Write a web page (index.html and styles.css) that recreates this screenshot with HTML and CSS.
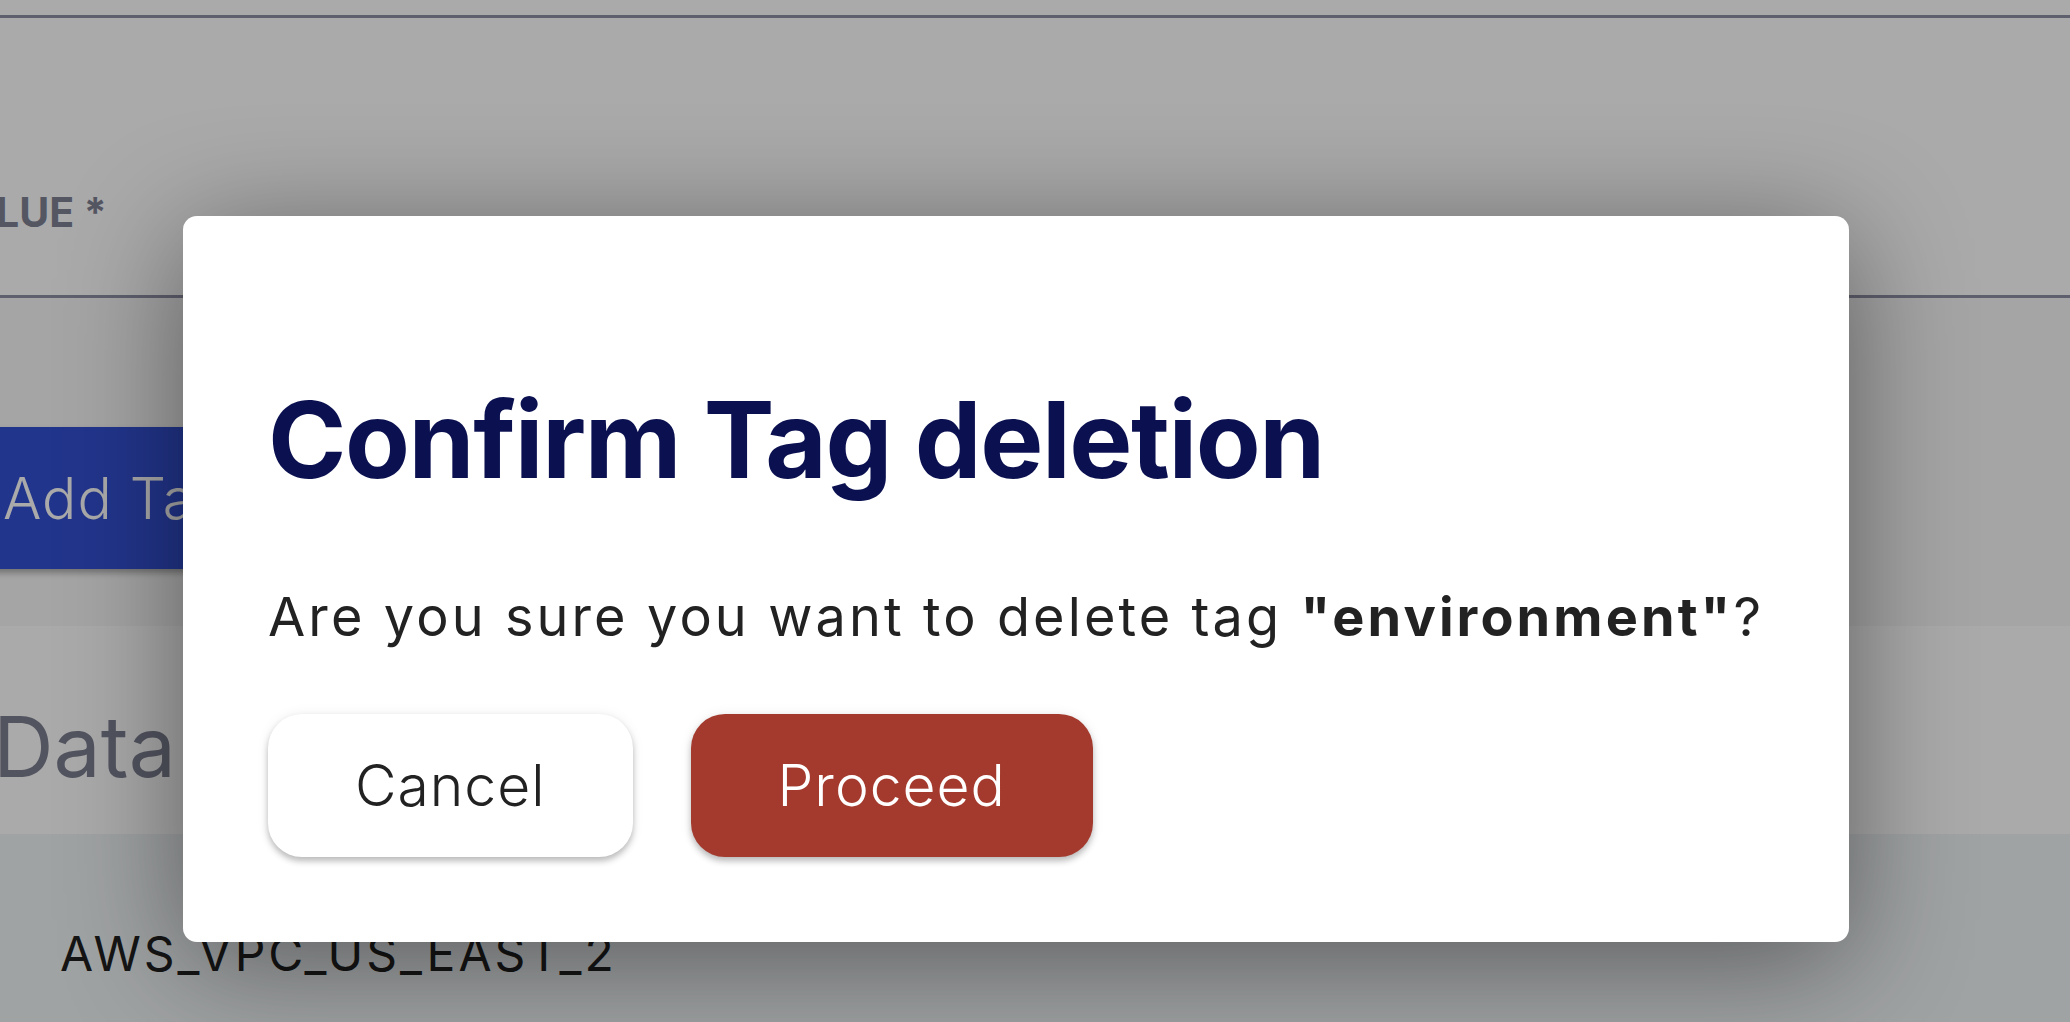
FILE: index.html
```html
<!DOCTYPE html>
<html lang="en">
<head>
<meta charset="utf-8">
<title>Confirm Tag deletion</title>
<link rel="stylesheet" href="styles.css">
</head>
<body>
<div class="page">
  <section class="form-card">
    <div class="field field-key"></div>
    <div class="field field-value">
      <label class="field-label">VALUE *</label>
    </div>
  </section>
  <section class="actions">
    <button class="btn-add">Add Tag</button>
  </section>
  <section class="data-section">
    <h2 class="data-title">Data</h2>
  </section>
  <div class="table-row">
    <span class="cell">AWS_VPC_US_EAST_2</span>
  </div>
</div>
<div class="backdrop"></div>
<div class="modal" role="dialog">
  <h1 class="modal-title">Confirm Tag deletion</h1>
  <p class="modal-text">Are you sure you want to delete tag <strong>"environment"</strong>?</p>
  <div class="modal-actions">
    <button class="btn btn-cancel">Cancel</button>
    <button class="btn btn-proceed">Proceed</button>
  </div>
</div>
</body>
</html>
```
FILE: styles.css
```css
* { box-sizing: border-box; margin: 0; padding: 0; }
html, body { width: 2070px; height: 1022px; }
body {
  font-family: Inter, "Noto Sans", sans-serif;
  background: #fff;
  overflow: hidden;
  position: relative;
}
.page { margin-left: -85px; }

.form-card { background: #fff; height: 298px; }
.field-key { height: 18px; border-bottom: 3px solid #8f91a6; }
.field-value {
  height: 280px;
  padding: 169px 0 0 23px;
  border-bottom: 3px solid #8f91a6;
}
.field-label {
  display: block;
  font-weight: 700;
  font-size: 41px;
  line-height: 50px;
  color: #7e8194;
}

.actions { background: #f8f8f8; height: 328px; padding-top: 129px; }
.btn-add {
  height: 142px;
  padding: 0 88px;
  border: 0;
  border-radius: 34px;
  background: #3450d2;
  color: #fff;
  font-family: inherit;
  font-weight: 300;
  font-size: 57px;
  letter-spacing: 1px;
  box-shadow: 0 4px 6px rgba(0,0,0,0.3);
}

.data-section { background: #fff; height: 208px; padding: 71px 0 0 78px; }
.data-title { font-weight: 400; font-size: 84px; line-height: 100px; color: #7c7f90; }

.table-row { background: #f0f5f7; height: 188px; padding: 90px 0 0 145px; }
.cell { font-size: 48px; line-height: 60px; letter-spacing: 3px; color: #202020; }

.backdrop { position: fixed; inset: 0; background: rgba(0,0,0,0.333); }

.modal {
  position: absolute;
  left: 183px;
  top: 216px;
  width: 1666px;
  background: #fff;
  border-radius: 14px;
  padding: 160px 60px 85px 85px;
  box-shadow: 0 20px 120px rgba(0,0,0,0.45);
}
.modal-title {
  font-weight: 700;
  font-size: 106px;
  line-height: 128px;
  letter-spacing: -1.4px;
  color: #0b1150;
}
.modal-text {
  margin-top: 81px;
  font-size: 54px;
  line-height: 64px;
  letter-spacing: 3.1px;
  white-space: nowrap;
  color: #222;
}
.modal-text strong { font-weight: 700; }
.modal-actions { display: flex; gap: 58px; margin-top: 65px; }
.btn {
  height: 143px;
  padding: 0 87px;
  border: 0;
  border-radius: 34px;
  font-family: inherit;
  font-weight: 300;
  font-size: 57px;
  letter-spacing: 1px;
  display: flex;
  align-items: center;
  justify-content: center;
  box-shadow: 0 4px 6px rgba(0,0,0,0.25), 0 0 14px rgba(0,0,0,0.06);
}
.btn-cancel { background: #fff; color: #222; }
.btn-proceed { background: #a43a2d; color: #fff; }
```
